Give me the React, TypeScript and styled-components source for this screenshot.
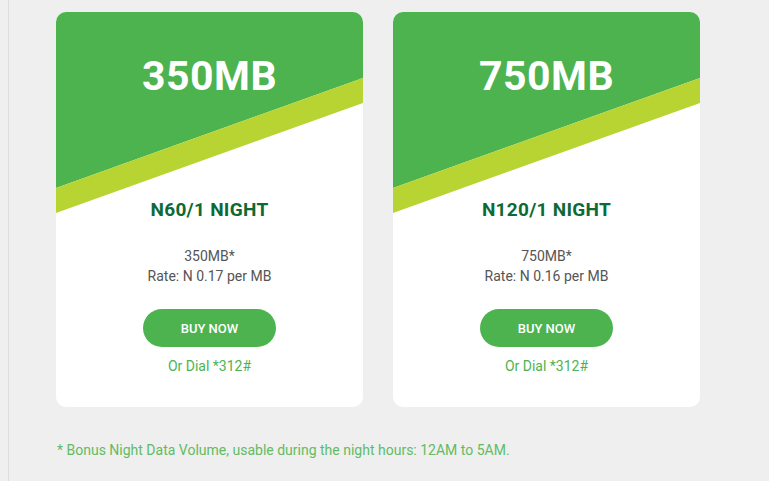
import React from 'react';
import styled, { createGlobalStyle } from 'styled-components';

const GlobalStyle = createGlobalStyle`
	html, body {
		margin: 0;
		padding: 0;
		background: #efefef;
		font-family: Roboto, 'Liberation Sans', sans-serif;
	}
`;

const StyledPage = styled.div`
	margin-left: 8px;
	min-height: 481px;
	border-left: 1px solid #dcdcdc;
	padding: 12px 0 0 48px;
	box-sizing: border-box;
`;

const StyledCardRow = styled.div`
	display: flex;
	gap: 30px;
	margin-left: -1px;
`;

const StyledCard = styled.div`
	position: relative;
	width: 307px;
	height: 395px;
	background: #fff;
	border-radius: 10px;
	overflow: hidden;
	display: flex;
	flex-direction: column;
	align-items: center;
`;

const StyledBanner = styled.svg`
	position: absolute;
	top: 0;
	left: 0;
`;

const StyledVolume = styled.div`
	position: relative;
	margin-top: 40px;
	font-size: 41px;
	font-weight: 700;
	line-height: 48px;
	color: #fff;
	letter-spacing: 0.5px;
`;

const StyledPrice = styled.div`
	position: relative;
	margin-top: 98px;
	font-size: 19px;
	font-weight: 700;
	line-height: 24px;
	color: #0d6a36;
	letter-spacing: 0.3px;
`;

const StyledDetails = styled.div`
	margin-top: 24px;
	font-size: 14px;
	line-height: 20px;
	color: #555;
	text-align: center;
`;

const StyledBuyButton = styled.button`
	margin-top: 23px;
	width: 133px;
	height: 38px;
	border: none;
	border-radius: 19px;
	background: #4cb34f;
	color: #fff;
	font-family: inherit;
	font-size: 13px;
	font-weight: 500;
	cursor: pointer;
`;

const StyledDial = styled.div`
	margin-top: 10px;
	font-size: 14px;
	line-height: 18px;
	color: #4cb34f;
`;

const StyledNote = styled.p`
	margin: 34px 0 0;
	font-size: 14px;
	line-height: 18px;
	color: #62bb64;
`;

interface Plan {
	volume: string;
	price: string;
	rate: string;
}

const plans: Plan[] = [
	{ volume: '350MB', price: 'N60/1 NIGHT', rate: 'N 0.17' },
	{ volume: '750MB', price: 'N120/1 NIGHT', rate: 'N 0.16' },
];

const PlanCard: React.FunctionComponent<{ plan: Plan }> = ({ plan }) => (
	<StyledCard>
		<StyledBanner width='307' height='202' viewBox='0 0 307 202'>
			<polygon points='0,0 307,0 307,66 0,176' fill='#4cb34f' />
			<polygon points='0,176 307,66 307,91 0,201' fill='#b8d432' />
		</StyledBanner>
		<StyledVolume>{plan.volume}</StyledVolume>
		<StyledPrice>{plan.price}</StyledPrice>
		<StyledDetails>
			{plan.volume}*
			<br />
			Rate: {plan.rate} per MB
		</StyledDetails>
		<StyledBuyButton>BUY NOW</StyledBuyButton>
		<StyledDial>Or Dial *312#</StyledDial>
	</StyledCard>
);

const App: React.FunctionComponent = () => (
	<>
		<GlobalStyle />
		<StyledPage>
			<StyledCardRow>
				{plans.map((plan) => (
					<PlanCard key={plan.volume} plan={plan} />
				))}
			</StyledCardRow>
			<StyledNote>* Bonus Night Data Volume, usable during the night hours: 12AM to 5AM.</StyledNote>
		</StyledPage>
	</>
);

export default App;
